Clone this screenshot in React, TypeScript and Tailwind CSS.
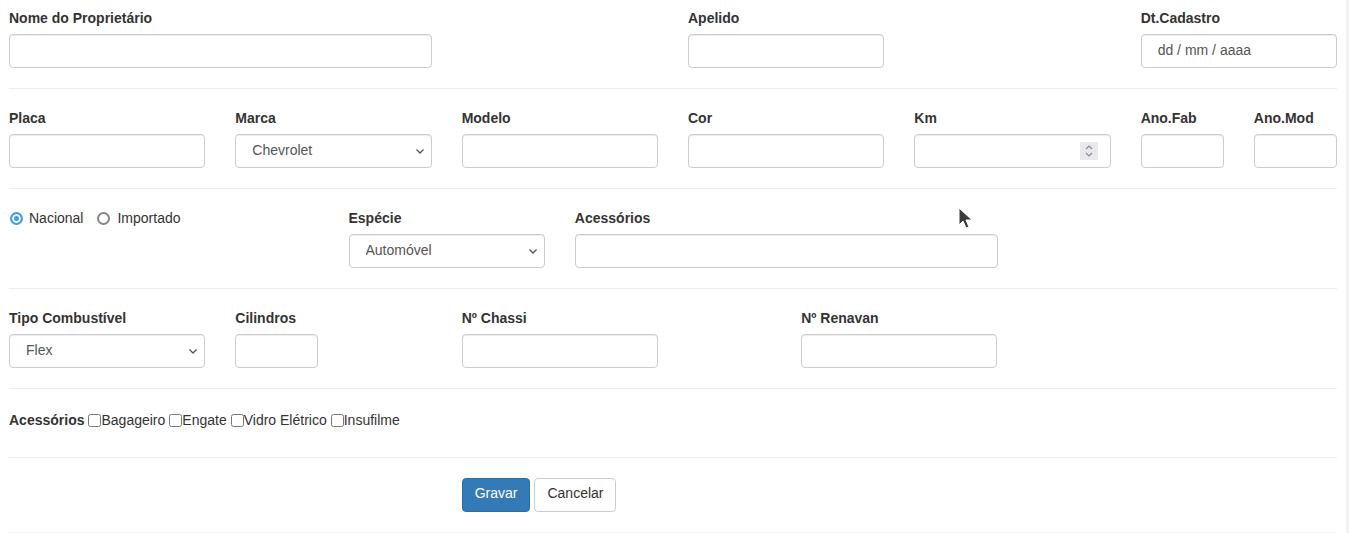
import React from 'react';

const inputCls =
  'block h-[34px] w-full rounded border border-[#ccc] bg-white px-3 text-sm text-[#555] shadow-[inset_0_1px_1px_rgba(0,0,0,0.075)] outline-none';

function Label({ children }: { children: React.ReactNode }) {
  return <label className="mb-[6px] block text-sm font-bold leading-5 text-[#333]">{children}</label>;
}

function Field({ label, className, children }: { label: string; className?: string; children?: React.ReactNode }) {
  return (
    <div className={className}>
      <Label>{label}</Label>
      {children ?? <input type="text" className={inputCls} />}
    </div>
  );
}

function Select({ value, options }: { value: string; options: string[] }) {
  return (
    <div className="relative">
      <select defaultValue={value} className={inputCls + ' appearance-none !pl-4 pb-[2px]'}>
        {options.map((o) => (
          <option key={o}>{o}</option>
        ))}
      </select>
      <svg
        className="pointer-events-none absolute right-[7px] top-[13px]"
        width="10"
        height="8"
        viewBox="0 0 10 8"
        fill="none"
        stroke="#555"
        strokeWidth="1.3"
      >
        <path d="M1.5 2.5 L5 6 L8.5 2.5" />
      </svg>
    </div>
  );
}

const radioCls =
  'm-0 h-[13px] w-[13px] appearance-none rounded-full border-2 border-[#858585] bg-white checked:border-[#3c9fe5] checked:bg-[#3c9fe5] checked:shadow-[inset_0_0_0_2px_#fff]';

export default function App() {
  return (
    <div className="flex min-h-[533px] bg-white text-sm text-[#333]" style={{ fontFamily: '"Liberation Sans", Arial, sans-serif' }}>
      <div className="relative w-[1346px] px-[9px]">
        {/* Proprietário */}
        <div className="grid grid-cols-12 gap-x-[30px] pt-2">
          <Field label="Nome do Proprietário" className="col-span-4" />
          <Field label="Apelido" className="col-span-2 col-start-7" />
          <Field label="Dt.Cadastro" className="col-span-2 col-start-11">
            <div className={inputCls + ' flex items-center !pl-4 pb-[2px]'}>dd / mm / aaaa</div>
          </Field>
        </div>
        <hr className="mt-5 border-[#eee]" />

        {/* Veículo */}
        <div className="grid grid-cols-12 gap-x-[30px] pt-[19px]">
          <Field label="Placa" className="col-span-2" />
          <Field label="Marca" className="col-span-2">
            <Select value="Chevrolet" options={['Chevrolet', 'Fiat', 'Ford', 'Volkswagen']} />
          </Field>
          <Field label="Modelo" className="col-span-2" />
          <Field label="Cor" className="col-span-2" />
          <Field label="Km" className="col-span-2">
            <div className="relative">
              <input type="text" className={inputCls} />
              <div className="absolute right-[13px] top-[8px] flex h-[18px] w-[18px] items-center justify-center bg-[#e9e9ed]">
                <svg width="10" height="14" viewBox="0 0 10 14" fill="none" stroke="#8a8a8f" strokeWidth="1.2">
                  <path d="M2 5 L5 2 L8 5" />
                  <path d="M2 9 L5 12 L8 9" />
                </svg>
              </div>
            </div>
          </Field>
          <Field label="Ano.Fab" className="col-span-1" />
          <Field label="Ano.Mod" className="col-span-1" />
        </div>
        <hr className="mt-5 border-[#eee]" />

        {/* Origem / Espécie */}
        <div className="grid grid-cols-12 gap-x-[30px] pt-[19px]">
          <div className="col-span-3 flex h-5 items-center leading-5">
            <label className="inline-flex items-center">
              <input type="radio" name="origem" defaultChecked className={radioCls + ' ml-[1px] mr-[6px]'} />
              Nacional
            </label>
            <label className="ml-[14px] inline-flex items-center">
              <input type="radio" name="origem" className={radioCls + ' mr-[7px]'} />
              Importado
            </label>
          </div>
          <Field label="Espécie" className="col-span-2">
            <Select value="Automóvel" options={['Automóvel', 'Motocicleta', 'Caminhão']} />
          </Field>
          <Field label="Acessórios" className="col-span-4" />
        </div>
        <hr className="mt-5 border-[#eee]" />

        {/* Motor / Documentos */}
        <div className="grid grid-cols-12 gap-x-[30px] pt-[19px]">
          <Field label="Tipo Combustível" className="col-span-2">
            <Select value="Flex" options={['Flex', 'Gasolina', 'Etanol', 'Diesel']} />
          </Field>
          <Field label="Cilindros" className="col-span-1" />
          <Field label="Nº Chassi" className="col-span-2 col-start-5" />
          <Field label="Nº Renavan" className="col-span-2 col-start-8" />
        </div>
        <hr className="mt-5 border-[#eee]" />

        {/* Acessórios */}
        <div className="flex items-center pt-[21px] leading-5">
          <span className="mr-1 font-bold">Acessórios</span>
          {['Bagageiro', 'Engate', 'Vidro Elétrico', 'Insufilme'].map((a, i) => (
            <label key={a} className={'inline-flex items-center ' + (i > 0 ? 'ml-1' : '')}>
              <input type="checkbox" className="m-0 h-[13px] w-[13px]" />
              {a}
            </label>
          ))}
        </div>
        <hr className="mt-[27px] border-[#eee]" />

        {/* Ações */}
        <div className="grid grid-cols-12 gap-x-[30px] pt-5">
          <div className="col-span-4 col-start-5 flex gap-1">
            <button className="h-[34px] rounded border border-[#2e6da4] bg-[#337ab7] px-3 pb-[4px] text-sm text-white">Gravar</button>
            <button className="h-[34px] rounded border border-[#ccc] bg-white px-3 pb-[4px] text-sm text-[#333]">Cancelar</button>
          </div>
        </div>
        <hr className="mt-5 border-[#eee]" />

        {/* cursor */}
        <svg className="absolute left-[958px] top-[207px]" width="16" height="24" viewBox="0 0 16 24">
          <path d="M1 1 L1 18 L5 14 L8 21 L11 20 L8 13 L14 13 Z" fill="#3c3c3c" stroke="#fff" strokeWidth="1" />
        </svg>
      </div>
      <div className="flex-1 bg-[#f1f1f1]" />
    </div>
  );
}
